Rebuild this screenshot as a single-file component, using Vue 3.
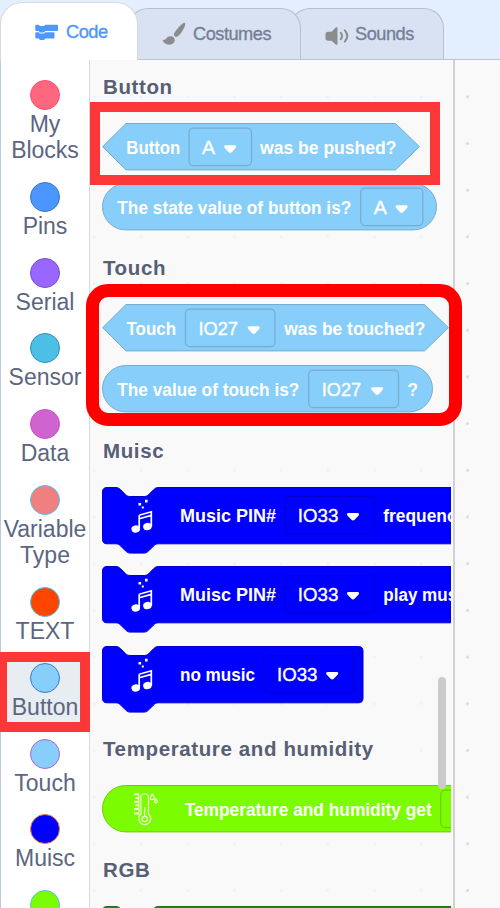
<script setup>
const categories = [
  { name: 'My Blocks', tone: 'rose', wrap: true },
  { name: 'Pins', tone: 'blue' },
  { name: 'Serial', tone: 'violet' },
  { name: 'Sensor', tone: 'cyan' },
  { name: 'Data', tone: 'orchid' },
  { name: 'Variable Type', tone: 'coral', wrap: true },
  { name: 'TEXT', tone: 'orange' },
  { name: 'Button', tone: 'sky', selected: true },
  { name: 'Touch', tone: 'touch' },
  { name: 'Muisc', tone: 'navy' },
  { name: '', tone: 'lime' },
]

// x and w are measured from the left edge of each block
const sections = [
  {
    title: 'Button',
    blocks: [
      { shape: 'hex', w: 317.5, texts: [['Button', 24.3, 54], ['was be pushed?', 158, 136.5]], field: ['A', 87, 62.5, 13] },
      { shape: 'round', w: 334.5, texts: [['The state value of button is?', 15.3, 234]], field: ['A', 258.7, 62.2, 13] },
    ],
  },
  {
    title: 'Touch',
    blocks: [
      { shape: 'hex', w: 346.5, texts: [['Touch', 24.5, 49.5], ['was be touched?', 182.3, 141]], field: ['IO27', 83.5, 89.5, 39.5] },
      { shape: 'round', w: 330.5, texts: [['The value of touch is?', 15.3, 182], ['?', 305.5, 10.5]], field: ['IO27', 206.7, 89.8, 39.5] },
    ],
  },
  {
    title: 'Muisc',
    blocks: [
      { shape: 'stack', w: 420, icon: 'music', texts: [['Music PIN#', 78, 96], ['frequency', 281.3, 83]], field: ['IO33', 182.8, 89.5, 40.5] },
      { shape: 'stack', w: 420, icon: 'music', texts: [['Muisc PIN#', 78, 96], ['play music', 281.3, 88]], field: ['IO33', 182.8, 89.5, 40.5] },
      { shape: 'stack', w: 261, icon: 'music', texts: [['no music', 78, 75]], field: ['IO33', 162, 89.5, 40.5] },
    ],
  },
  {
    title: 'Temperature and humidity',
    blocks: [
      { shape: 'round', w: 460, lime: true, icon: 'thermo', texts: [['Temperature and humidity get', 82.7, 247]], field: ['', 338.7, 90, 0] },
    ],
  },
  { title: 'RGB', blocks: [{ shape: 'stack', w: 420, green: true, texts: [] }] },
]

const H = 47.3
function outline(b) {
  const w = b.w
  if (b.shape === 'hex') return `M24 .5H${w - 24}L${w} 23.7L${w - 24} ${H - 0.4}H24L.6 23.7Z`
  if (b.shape === 'round') return `M23.7 .5H${w - 23.2}a23.2 23.2 0 0 1 0 46.4H23.7a23.2 23.2 0 0 1 0-46.4Z`
  return `M.5 5Q.5 .5 5 .5H14c2.3 0 3.5 1.2 4.7 2.3l4.7 4.7c1.2 1.1 2.3 2 4.7 2h14c2.3 0 3.5-.9 4.7-2l4.7-4.7c1.2-1.1 2.3-2.3 4.7-2.3H${w - 4.5}q4.5 0 4.5 4.5V52.3q0 4.5-4.5 4.5H56.2c-2.3 0-3.5 1.2-4.7 2.3l-4.7 4.7c-1.2 1.1-2.3 2.3-4.7 2.3h-14c-2.3 0-3.5-1.2-4.7-2.3l-4.7-4.7c-1.2-1.1-2.3-2.3-4.7-2.3H5Q.5 56.8 .5 52.3Z`
}
const baseline = (b) => (b.shape === 'stack' ? 35 : 31.3)
const fieldTop = (b) => (b.shape === 'stack' ? 9.5 : 5.1)
</script>

<template>
  <div class="editor">
    <header class="tabs">
      <div class="tab active">
        <svg class="ic-code" width="24" height="18" viewBox="0 0 24 18">
          <path d="M1.3.8h2.3l1.4 1.3h4L10.400 .8H22q1 0 1 1V6q0 1-1 1H10.500L9 8.400H5L3.600 7H1.300q-1 0-1-1V1.800q0-1 1-1Z" />
          <path d="M1.300 8.300h2.300L5 9.600h4l1.400-1.300H18.500q1 0 1 1v4.300q0 1-1 1H10.500L9 16H5l-1.400-1.400H1.300q-1 0-1-1V9.300q0-1 1-1Z" />
        </svg>
        <span>Code</span>
      </div>
      <div class="tab costumes">
        <svg class="ic-brush" width="24" height="24" viewBox="0 0 24 24">
          <path d="M22.700 .8c1 .7.600 2.300-.2 4.100-1.500 3.400-4 7.200-6.600 9.300-1.100.9-2.300.8-3.200 0s-1.200-1.900-.4-3.200C14 8.200 17.500 4 20.300 1.700c1-.8 1.800-1.300 2.400-.9Z" />
          <path d="M11.800 15.600c1.400 1.500 1.200 4-.3 5.500-2.500 2.500-7.700 2.200-10.300-1.700-.6-.9-.4-1.700.4-1.700 1.400.1 1.800-.3 2.600-1.300 1.900-2.400 5.600-2.900 7.600-.8Z" />
        </svg>
        <span>Costumes</span>
      </div>
      <div class="tab sounds">
        <svg class="ic-sound" width="24" height="20" viewBox="0 0 24 20">
          <path d="M10.700 1.500c.9-.7 1.800-.4 1.800.8v15.400c0 1.200-.9 1.500-1.800.8L6.500 14.800H3C1.300 14.800.5 13.800.5 12.300V8.200c0-1.500.9-2.500 2.500-2.500h3.500Z" />
          <path class="wave" d="M15.800 6.800q2.500 3.200 0 6.400M19.800 4.400q5 5.600 0 11.200" />
        </svg>
        <span>Sounds</span>
      </div>
    </header>

    <main class="body">
      <nav class="categories">
        <div v-for="(c, i) in categories" :key="i" class="category" :class="{ selected: c.selected }">
          <i class="bubble" :class="c.tone"></i>
          <span class="label" :class="{ wrap: c.wrap }">{{ c.name }}</span>
        </div>
      </nav>

      <div class="palette">
        <div class="flyout">
          <section v-for="s in sections" :key="s.title" :class="{ stacked: s.title === 'Muisc' }">
            <h2>{{ s.title }}</h2>
            <div class="blocks">
              <svg
                v-for="(b, i) in s.blocks"
                :key="i"
                class="block"
                :class="[b.shape, { lime: b.lime, green: b.green }]"
                width="348.5"
                :height="b.shape === 'stack' ? 57.3 : 47.3"
              >
                <path class="outline" :d="outline(b)" />
                <g v-if="b.icon === 'music'" class="notes">
                  <path d="M37.200 28.200L49.300 24.800V39.800M37.200 42.500V28.200M37.200 31.800L49.300 28.400" />
                  <ellipse cx="33.700" cy="42" rx="4.300" ry="3.600" transform="rotate(-15 33.700 42)" />
                  <ellipse cx="45.400" cy="39.600" rx="4.300" ry="3.600" transform="rotate(-15 45.400 39.600)" />
                  <path class="sparks" d="M36.500 16h2.600v2.600h-2.600zM39.800 19.500h2v2h-2zM43 12.800h2.600v2.600H43z" />
                </g>
                <g v-if="b.icon === 'thermo'" class="thermo">
                  <path d="M38.900 29V12.500a3.800 3.800 0 0 1 7.600 0V29a6 6 0 1 1-7.600 0Z" />
                  <circle cx="42.700" cy="34" r="2.700" />
                  <path d="M42.700 31V22M36.800 9V29.500" />
                  <path class="ticks" d="M32 9.300h5M33.500 13h3.500M32 16.700h5M33.500 20.300h3.500M32 24h5M32 28.500h5" />
                  <path d="M50.500 9q-4.500 5-.5 5.600 4.500-.2.500-5.600ZM54 13.800q-2.600 3.600 0 4.100 2.800-.3 0-4.100Z" />
                </g>
                <text
                  v-for="t in b.texts"
                  :key="t[0]"
                  class="words"
                  :x="t[1]"
                  :y="baseline(b)"
                  :textLength="t[2]"
                  lengthAdjust="spacingAndGlyphs"
                >{{ t[0] }}</text>
                <g v-if="b.field">
                  <rect class="field" :x="b.field[1]" :y="fieldTop(b)" :width="b.field[2]" height="37.500" rx="4.500" />
                  <template v-if="b.field[0]">
                    <text
                      class="value"
                      :x="b.field[1] + 13"
                      :y="baseline(b)"
                      :textLength="b.field[3]"
                      lengthAdjust="spacingAndGlyphs"
                    >{{ b.field[0] }}</text>
                    <path
                      class="arrow"
                      :transform="`translate(${b.field[1] + b.field[2] - 27.500} ${baseline(b) - 9})`"
                      d="M1.600 0h9.200q2.200 .4 1 2.400L8 6.600Q6.200 8.400 4.400 6.600L.6 2.400Q-.6.400 1.600 0Z"
                    />
                  </template>
                </g>
              </svg>
            </div>
          </section>
        </div>
        <div class="scrollbar"></div>
      </div>

      <div class="workspace"></div>
    </main>

    <div class="mark pushed"></div>
    <div class="mark touched"></div>
    <div class="mark chosen"></div>
  </div>
</template>

<style>
body {
  margin: 0;
  overflow: hidden;
}
</style>

<style scoped>
.editor {
  position: relative;
  box-sizing: border-box;
  width: 500px;
  height: 908px;
  overflow: hidden;
  display: flex;
  flex-direction: column;
  background: #e3efff;
  font-family: "Liberation Sans", Arial, sans-serif;
}
.tabs {
  display: flex;
  align-items: flex-end;
  flex: none;
  height: 60px;
  box-sizing: border-box;
  border-bottom: 1px solid #bcc5d4;
}
.tab {
  display: flex;
  align-items: center;
  box-sizing: border-box;
  height: 51px;
  border: 1px solid #b5bfce;
  border-bottom: 0;
  border-radius: 20px 20px 0 0;
  background: #d9e2f2;
  color: #757f98;
  font-size: 18.2px;
  letter-spacing: -0.48px;
  -webkit-text-stroke: 0.35px currentColor;
}
.tab svg {
  fill: #8b8c8d;
}
.tab.active {
  z-index: 3;
  width: 138px;
  height: 58px;
  margin-bottom: -1px;
  padding: 0 0 0 34px;
  gap: 7px;
  border-color: #d5dae1;
  border-radius: 22px 22px 0 0;
  background: #fff;
  color: #4d97ff;
  box-sizing: border-box;
}
.tab.active span {
  margin-top: 1px;
}
.tab.active svg {
  fill: #4d97ff;
  margin-top: 3px;
}
.costumes {
  z-index: 2;
  width: 173px;
  margin-left: -10px;
  padding-left: 33px;
  gap: 7px;
}
.sounds {
  width: 154px;
  margin-left: -11px;
  padding-left: 34px;
  gap: 6px;
}
.tab.costumes span,
.tab.sounds span {
  margin-top: 1px;
}
.sounds svg {
  margin-top: 3px;
}
.tab svg .wave {
  fill: none;
  stroke: #8b8c8d;
  stroke-width: 2;
  stroke-linecap: round;
}
.body {
  display: flex;
  flex: 1;
  min-height: 0;
}
.categories {
  display: flex;
  flex-direction: column;
  flex: none;
  box-sizing: border-box;
  width: 90px;
  padding-top: 10.5px;
  border-left: 1px solid #bccbe0;
  border-right: 1px solid #d9d9d9;
  background: #fff;
  overflow: hidden;
}
.category {
  display: flex;
  flex-direction: column;
  align-items: center;
  flex: none;
  box-sizing: border-box;
  padding: 9.3px 0;
  gap: 1px;
}
.category.selected {
  background: #e8edf1;
}
.bubble {
  box-sizing: border-box;
  width: 30px;
  height: 30px;
  border-radius: 50%;
  border: 1.5px solid;
}
.label {
  min-height: 26.2px;
  color: #5c6581;
  font-size: 23px;
  line-height: 26.2px;
  text-align: center;
  white-space: nowrap;
}
.label.wrap {
  width: min-content;
  white-space: normal;
}
.rose { background: #ff6680; border-color: #ff4d6a; }
.blue { background: #4c97ff; border-color: #3373cc; }
.violet { background: #9966ff; border-color: #774dcb; }
.cyan { background: #4cbfe6; border-color: #2e8eb8; }
.orchid { background: #cf63cf; border-color: #c94fc9; }
.coral { background: #f08080; border-color: #4cc3f5; }
.orange { background: #ff4500; border-color: #45c4ea; }
.sky { background: #87cefa; border-color: #3d79d0; }
.touch { background: #87cefa; border-color: #b85fdb; }
.navy { background: #0000ff; border-color: #f08030; }
.bubble.lime { background: #7cfc00; border-color: #4bc6e8; }

.palette {
  position: relative;
  flex: none;
  box-sizing: border-box;
  width: 365px;
  border-right: 2px solid #d2d2d2;
  background-color: #f9f9f9;
  background-image: radial-gradient(circle at center, #efefef 0.8px, transparent 1.500px);
  background-size: 46.7px 46.7px;
  background-position: -19px 13.500px;
}
.flyout {
  box-sizing: border-box;
  width: 360.5px;
  height: 848px;
  padding: 14.500px 0 0 12px;
  overflow: hidden;
  display: flex;
  flex-direction: column;
  gap: 26px;
}
section {
  display: flex;
  flex-direction: column;
  gap: 24px;
}
section.stacked {
  margin-top: 0.5px;
  margin-bottom: 8.100px;
}
h2 {
  margin: 0 0 0 1px;
  height: 24px;
  color: #575e75;
  font-size: 20.5px;
  line-height: 24px;
  font-weight: 700;
  letter-spacing: 0.62px;
  white-space: nowrap;
}
.blocks {
  display: flex;
  flex-direction: column;
  gap: 13.4px;
}
.stacked .blocks {
  gap: 22px;
}
.block {
  display: block;
  flex: none;
  overflow: visible;
  background: none;
  fill: #87cefa;
  stroke: #76adcf;
}
.block.stack {
  fill: #0000ff;
  stroke: #0000cd;
}
.block.lime {
  fill: #7cfc00;
  stroke: #68ce08;
}
.block.green {
  fill: #198c19;
  stroke: #147514;
}
.words,
.value {
  fill: #fff;
  stroke: none;
  font-size: 19.2px;
}
.words {
  font-weight: 700;
}
.value {
  stroke: #fff;
  stroke-width: 0.4px;
}
.arrow {
  fill: #fff;
  stroke: none;
}
.field {
  fill: none;
  stroke-width: 1.2px;
}
.notes path {
  fill: none;
  stroke: #fff;
  stroke-width: 1.7px;
}
.notes ellipse,
.notes .sparks {
  fill: #fff;
  stroke: none;
}
.thermo * {
  fill: none;
  stroke: #e9ffd0;
  stroke-width: 1.2px;
}
.thermo .ticks {
  stroke-width: 1.9px;
}
.scrollbar {
  position: absolute;
  left: 347.500px;
  top: 616.500px;
  width: 8.500px;
  height: 112px;
  border-radius: 5px;
  background: #cbcbcb;
}
.workspace {
  flex: 1;
  background-color: #f9f9f9;
  background-image: radial-gradient(circle at center, #d6d6d6 0.9px, transparent 1.700px);
  background-size: 46.7px 46.7px;
  background-position: -10.800px 13.500px;
}
.mark {
  position: absolute;
  box-sizing: border-box;
  border: 10px solid #fc3737;
}
.pushed {
  left: 90px;
  top: 102px;
  width: 350px;
  height: 83px;
}
.touched {
  left: 86px;
  top: 284px;
  width: 376px;
  height: 142px;
  border: 13px solid #f00;
  border-radius: 22px;
}
.chosen {
  left: -3px;
  top: 652px;
  width: 93px;
  height: 80px;
}
</style>
